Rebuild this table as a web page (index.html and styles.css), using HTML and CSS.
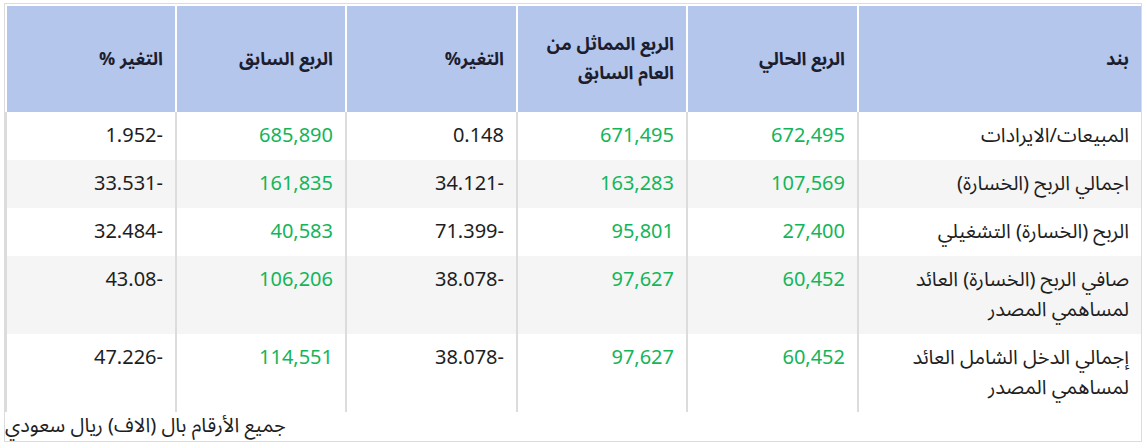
FILE: index.html
```html
<!DOCTYPE html>
<html lang="ar">
<head>
<meta charset="utf-8">
<link rel="stylesheet" href="styles.css">
</head>
<body>
<div class="box">
  <table class="fin" dir="rtl">
    <thead>
      <tr>
        <th class="c-item">بند</th>
        <th class="c-a">الربع الحالي</th>
        <th class="c-b">الربع المماثل من<br>العام السابق</th>
        <th class="c-a">التغير%</th>
        <th class="c-b">الربع السابق</th>
        <th class="c-b">التغير %</th>
      </tr>
    </thead>
    <tbody>
      <tr>
        <td>المبيعات/الايرادات</td>
        <td class="pos">672,495</td>
        <td class="pos">671,495</td>
        <td>0.148</td>
        <td class="pos">685,890</td>
        <td>-1.952</td>
      </tr>
      <tr class="alt">
        <td>اجمالي الربح (الخسارة)</td>
        <td class="pos">107,569</td>
        <td class="pos">163,283</td>
        <td>-34.121</td>
        <td class="pos">161,835</td>
        <td>-33.531</td>
      </tr>
      <tr>
        <td>الربح (الخسارة) التشغيلي</td>
        <td class="pos">27,400</td>
        <td class="pos">95,801</td>
        <td>-71.399</td>
        <td class="pos">40,583</td>
        <td>-32.484</td>
      </tr>
      <tr class="alt">
        <td>صافي الربح (الخسارة) العائد لمساهمي المصدر</td>
        <td class="pos">60,452</td>
        <td class="pos">97,627</td>
        <td>-38.078</td>
        <td class="pos">106,206</td>
        <td>-43.08</td>
      </tr>
      <tr>
        <td>إجمالي الدخل الشامل العائد لمساهمي المصدر</td>
        <td class="pos">60,452</td>
        <td class="pos">97,627</td>
        <td>-38.078</td>
        <td class="pos">114,551</td>
        <td>-47.226</td>
      </tr>
    </tbody>
  </table>
  <div class="note">جميع الأرقام بال (الاف) ريال سعودي</div>
</div>
</body>
</html>
```
FILE: styles.css
```css
html, body {
  margin: 0;
  padding: 0;
  background: #fff;
}
body {
  padding: 3px 4px;
  font-family: "Noto Sans Arabic", "Noto Sans", "DejaVu Sans", sans-serif;
  color: #1e1e1e;
}
.box {
  width: 1136px;
  border: 1px solid #dcdcdc;
}
.fin {
  width: 1136px;
  table-layout: fixed;
  border-collapse: separate;
  border-spacing: 0;
  font-size: 20px;
  line-height: 30px;
}
.fin th, .fin td {
  box-sizing: border-box;
  text-align: right;
  padding: 9px 12px 9px 8px;
}
.fin th {
  background: #b4c6ec;
  color: #1c1d2e;
  font-size: 18px;
  font-weight: 700;
  line-height: 29px;
  border-top: 2px solid #fff;
  border-left: 2px solid #fff;
  padding-top: 24px;
  padding-bottom: 24px;
  vertical-align: middle;
}
.c-item { width: 284px; }
.c-a { width: 171px; }
.c-b { width: 170px; }
.fin td {
  border-left: 2px solid #dcdcdc;
  vertical-align: top;
}
.fin tr.alt td {
  background: #f5f5f5;
}
.fin td.pos {
  color: #14b55a;
}
.note {
  font-size: 20px;
  line-height: 29px;
  color: #1e1e1e;
  text-align: left;
}
```
